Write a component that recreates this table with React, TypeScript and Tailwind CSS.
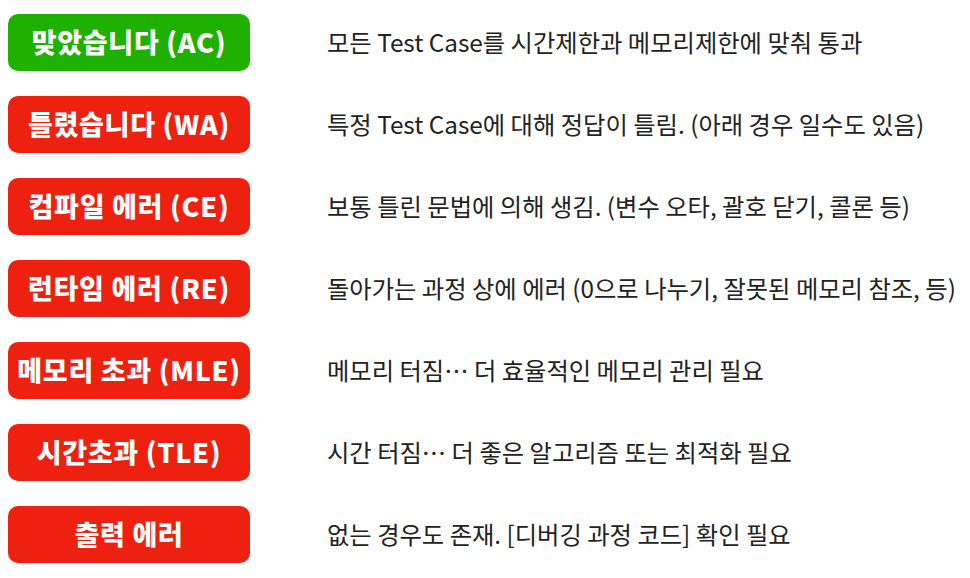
import React from 'react'

const rows = [
  { label: '맞았습니다 (AC)', desc: '모든 Test Case를 시간제한과 메모리제한에 맞춰 통과', ok: true },
  { label: '틀렸습니다 (WA)', desc: '특정 Test Case에 대해 정답이 틀림. (아래 경우 일수도 있음)' },
  { label: '컴파일 에러 (CE)', desc: '보통 틀린 문법에 의해 생김. (변수 오타, 괄호 닫기, 콜론 등)' },
  { label: '런타임 에러 (RE)', desc: '돌아가는 과정 상에 에러 (0으로 나누기, 잘못된 메모리 참조, 등)' },
  { label: '메모리 초과 (MLE)', desc: '메모리 터짐… 더 효율적인 메모리 관리 필요' },
  { label: '시간초과 (TLE)', desc: '시간 터짐… 더 좋은 알고리즘 또는 최적화 필요' },
  { label: '출력 에러', desc: '없는 경우도 존재. [디버깅 과정 코드] 확인 필요' },
]

export default function App() {
  return (
    <div className="w-[970px] h-[578px] bg-white pt-[14px] pl-[8px] font-['Noto_Sans_CJK_KR',sans-serif]">
      <ul className="flex flex-col gap-[25px]">
        {rows.map((r) => (
          <li key={r.label} className="flex items-center">
            <div
              className={
                (r.ok ? 'bg-[#1eb100]' : 'bg-[#ee2110]') +
                ' w-[242px] h-[57px] shrink-0 rounded-[10px] flex items-center justify-center text-white text-[27px] font-black tracking-[0.7px] whitespace-nowrap'
              }
            >
              {r.label}
            </div>
            <p className="ml-[77px] text-[24.3px] leading-none text-[#222] whitespace-nowrap">{r.desc}</p>
          </li>
        ))}
      </ul>
    </div>
  )
}
